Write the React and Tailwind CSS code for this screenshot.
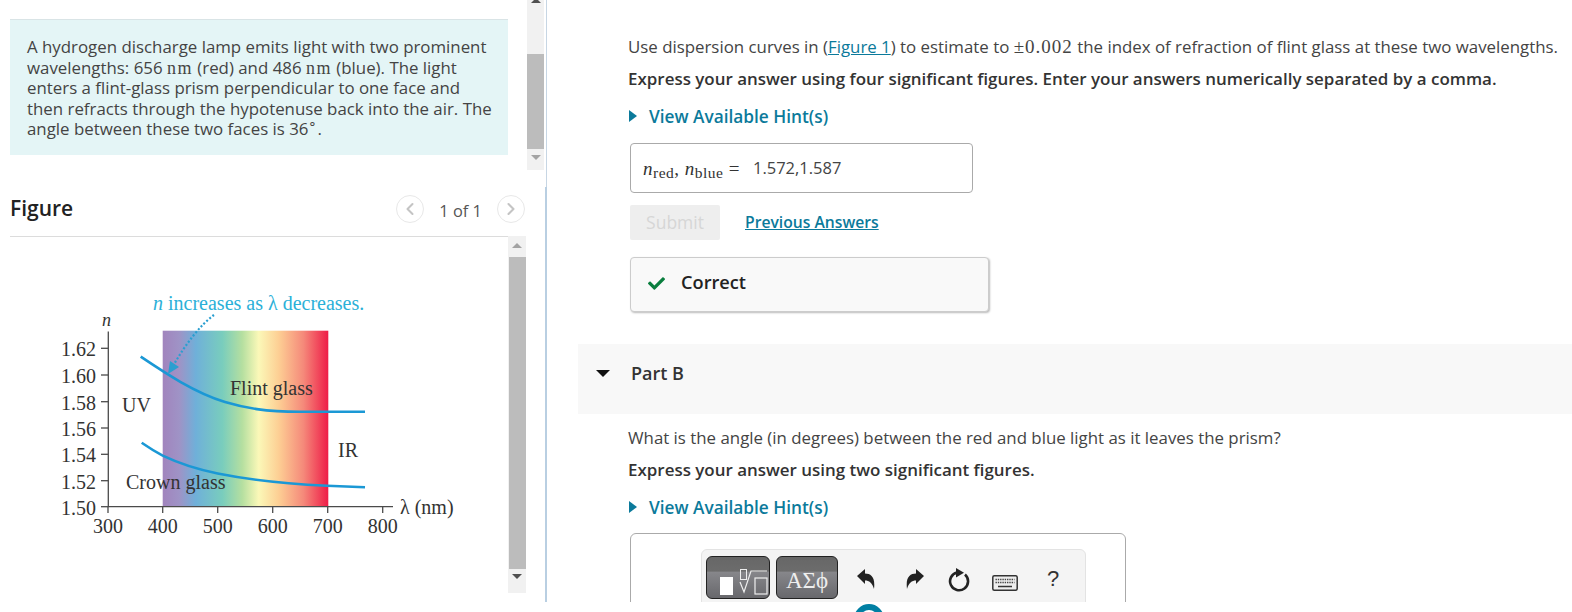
import React from 'react';
import { ChevronLeft, ChevronRight } from 'lucide-react';
import { FaCheck } from 'react-icons/fa';

const Nm = () => <span className="font-['Liberation_Serif',serif] text-[18px] leading-none tracking-[1.5px]">nm</span>;

const Hint = () => (
    <div className="flex h-[24px] items-center pl-[82px]">
        <div className="mb-[3px] h-0 w-0 border-y-[6px] border-l-[8px] border-y-transparent border-l-[#0b7a9b]"></div>
        <span className="ml-[12px] text-[17.25px] font-semibold text-[#0b7a9b]">View Available Hint(s)</span>
    </div>
);

const Chart = () => {
    const yTicks = [['1.62', 68.3], ['1.60', 95], ['1.58', 121.7], ['1.56', 148], ['1.54', 174.3], ['1.52', 200.7], ['1.50', 226.7]];
    const xTicks = [['300', 68], ['400', 122.7], ['500', 177.7], ['600', 232.7], ['700', 287.7], ['800', 342.7]];
    return (
        <svg width="430" height="270" viewBox="0 0 430 270" className="block font-['Liberation_Serif',serif]">
            <defs>
                <linearGradient id="spectrum" x1="0" x2="1" y1="0" y2="0">
                    <stop offset="0" stopColor="#a184bd" />
                    <stop offset="0.1" stopColor="#9f93c6" />
                    <stop offset="0.2" stopColor="#6fb0d9" />
                    <stop offset="0.36" stopColor="#79cdbd" />
                    <stop offset="0.48" stopColor="#b5dfa0" />
                    <stop offset="0.58" stopColor="#fbf8b8" />
                    <stop offset="0.7" stopColor="#fdcf94" />
                    <stop offset="0.85" stopColor="#f5897a" />
                    <stop offset="1" stopColor="#ee1c47" />
                </linearGradient>
            </defs>
            <rect x="122.7" y="50.7" width="165.6" height="176" fill="url(#spectrum)" />
            <path d="M68.3 51.5V226.7H353" fill="none" stroke="#4b4b4b" strokeWidth="1.3" />
            {yTicks.map(([label, y]) => (
                <g key={label}>
                    <line x1="61" x2="68.3" y1={y} y2={y} stroke="#4b4b4b" strokeWidth="1.3" />
                    <text x="56" y={y + 8} textAnchor="end" fontSize="20" fill="#333">{label}</text>
                </g>
            ))}
            {xTicks.map(([label, x]) => (
                <g key={label}>
                    <line x1={x} x2={x} y1="226.7" y2="233" stroke="#4b4b4b" strokeWidth="1.3" />
                    <text x={x} y="253" textAnchor="middle" fontSize="20" fill="#333">{label}</text>
                </g>
            ))}
            <path d="M100.7 76.7C125 93 155 113 185 122C205 128 225 131.7 260 131.7H325" fill="none" stroke="#1b98d5" strokeWidth="2.6" />
            <path d="M101.7 162.7C108 167 116 172 122.7 175.7C140 184 155 189 177.7 193.5C210 200 250 204 287 205.7L325 207.3" fill="none" stroke="#1b98d5" strokeWidth="2.6" />
            <path d="M174 35C160 45 145 65 133 86" fill="none" stroke="#2a9fd0" strokeWidth="2.2" strokeDasharray="2 2" />
            <path d="M128 94L130 81L139 87Z" fill="#2a9fd0" />
            <text x="113" y="30" fontSize="20" fill="#2bb0d8"><tspan fontStyle="italic">n</tspan> increases as λ decreases.</text>
            <text x="62" y="46" fontSize="18" fontStyle="italic" fill="#333">n</text>
            <text x="82" y="132" fontSize="20" fill="#333">UV</text>
            <text x="190" y="115" fontSize="20" fill="#333">Flint glass</text>
            <text x="298" y="177" fontSize="20" fill="#333">IR</text>
            <text x="86" y="209" fontSize="20" fill="#333">Crown glass</text>
            <text x="360" y="234" fontSize="20" fill="#333">λ (nm)</text>
        </svg>
    );
};

const Keyboard = () => (
    <svg width="26" height="16" viewBox="0 0 26 16">
        <rect x="0.8" y="0.8" width="24.4" height="14.4" rx="1.5" fill="#eee" stroke="#333" strokeWidth="1.5" />
        <path d="M3.5 4.5H22.5M3.5 7.5H22.5" stroke="#444" strokeWidth="1.6" strokeDasharray="1.4 0.9" />
        <path d="M6 11.5H20" stroke="#333" strokeWidth="1.5" />
    </svg>
);

const Refresh = () => (
    <svg width="24" height="25" viewBox="0 0 24 25">
        <path d="M10 5.5A9 9 0 1 0 18 7.5" fill="none" stroke="#222" strokeWidth="2.6" />
        <path d="M9 1L17 5.8L9 10.5Z" fill="#222" />
    </svg>
);

const Arrow = ({ flip }) => (
    <svg width="18" height="20" viewBox="0 0 18 20" className={flip ? '-scale-x-100' : ''}>
        <path d="M0 7L8 0V4.5C14 4.5 18.5 8 17 20C15.5 14 12 11.5 8 11.5V15Z" fill="#222" />
    </svg>
);

const Toolbar = () => (
    <div className="ml-[70px] mt-[15px] flex h-[70px] w-[385px] items-start rounded-[6px] border border-[#e3e3e3] bg-[#f4f4f4] pl-[4px] pt-[6px]">
        <button className="h-[43px] w-[64px] overflow-hidden rounded-[6px] border border-[#222] bg-[linear-gradient(#676767_0,#6c6c6c_35%,#87878b_36%,#68686c_100%)]">
            <svg width="62" height="41" viewBox="0 0 62 41" className="block">
                <rect x="13" y="20" width="13" height="18" fill="#fff" />
                <rect x="33.5" y="12.5" width="6" height="10" fill="none" stroke="#eee" />
                <path d="M33 25L37 35L44 14H60" fill="none" stroke="#eee" strokeWidth="1.2" />
                <rect x="48" y="21" width="12" height="16" fill="none" stroke="#eee" strokeWidth="1.2" />
            </svg>
        </button>
        <button className="ml-[6px] flex h-[43px] w-[62px] items-end justify-center rounded-[6px] border border-[#222] bg-[linear-gradient(#676767_0,#6c6c6c_35%,#87878b_36%,#68686c_100%)] pb-[4px] font-['Liberation_Serif',serif] text-[23px] leading-[26px] text-[#eee]">ΑΣϕ</button>
        <div className="ml-[19px] mt-[13px]"><Arrow /></div>
        <div className="ml-[31px] mt-[13px]"><Arrow flip /></div>
        <div className="ml-[23px] mt-[11px]"><Refresh /></div>
        <div className="ml-[21px] mt-[19px]"><Keyboard /></div>
        <span className="ml-[29px] mt-[9px] font-['Liberation_Sans',sans-serif] text-[22px] leading-[28px] text-[#333]">?</span>
    </div>
);

const App = () => {
    return (
        <div className="relative flex h-[612px] w-[1572px] overflow-hidden bg-white font-['Open_Sans',sans-serif] text-[16.85px] text-[#444]">
            <div className="h-[602px] w-[545px] shrink-0">
                <div className="flex h-[170px]">
                    <div className="w-[527px] pl-[10px] pt-[19px]">
                        <div className="h-[136px] w-[498px] border-t border-[#d9e4e6] bg-[#e4f5f6] pl-[17px] pt-[17px] leading-[20.5px]">
                            A hydrogen discharge lamp emits light with two prominent<br />
                            wavelengths: 656 <Nm /> (red) and 486 <Nm /> (blue). The light<br />
                            enters a flint-glass prism perpendicular to one face and<br />
                            then refracts through the hypotenuse back into the air. The<br />
                            angle between these two faces is 36<sup className="text-[14px] leading-none">∘</sup>.
                        </div>
                    </div>
                    <div className="flex w-[17px] flex-col items-center bg-[#f1f1f1]">
                        <div className="-mt-[2px] h-0 w-0 border-x-[5px] border-b-[5px] border-x-transparent border-b-[#505050]"></div>
                        <div className="mt-[51px] h-[95px] w-[17px] bg-[#bcbcbc]"></div>
                        <div className="mt-[6px] h-0 w-0 border-x-[5px] border-t-[5px] border-x-transparent border-t-[#a3a3a3]"></div>
                    </div>
                </div>
                <div className="flex h-[66px] w-[526px] items-center pl-[10px] pr-[1px] pt-[12px]">
                    <span className="text-[21px] font-semibold text-[#222]">Figure</span>
                    <div className="ml-auto flex h-[28px] w-[28px] items-center justify-center rounded-full border border-[#e8e8e8] text-[#c4c4c4]"><ChevronLeft size={20} strokeWidth={2.5} /></div>
                    <span className="mx-[15px] mt-[4px] text-[16.4px] text-[#555]">1 of 1</span>
                    <div className="flex h-[28px] w-[28px] items-center justify-center rounded-full border border-[#e8e8e8] text-[#c4c4c4]"><ChevronRight size={20} strokeWidth={2.5} /></div>
                </div>
                <div className="flex">
                    <div className="ml-[10px] h-[357px] w-[498px] border-t border-[#dcdcdc] pl-[30px] pt-[43px]">
                        <Chart />
                    </div>
                    <div className="flex h-[357px] w-[18px] flex-col items-center bg-[#f1f1f1]">
                        <div className="mt-[7px] h-0 w-0 border-x-[5px] border-b-[5px] border-x-transparent border-b-[#a3a3a3]"></div>
                        <div className="mt-[9px] h-[312px] w-[17px] bg-[#bcbcbc]"></div>
                        <div className="mt-[5px] h-0 w-0 border-x-[5px] border-t-[5px] border-x-transparent border-t-[#505050]"></div>
                    </div>
                </div>
            </div>
            <div className="flex w-[2px] shrink-0 flex-col items-end">
                <div className="h-[187px] w-[1px] bg-[#c7d6e4]"></div>
                <div className="h-[415px] w-[2px] bg-[#b9cfe2]"></div>
            </div>
            <div className="h-[602px] grow overflow-hidden">
                <div className="pl-[81px] pt-[35px] leading-[24px]">
                    Use dispersion curves in (<span className="text-[#0b7a9b] underline">Figure 1</span>) to estimate to <span className="font-['Liberation_Serif',serif] text-[19px] leading-none tracking-[1px]">±0.002</span> the index of refraction of flint glass at these two wavelengths.
                </div>
                <div className="mt-[8px] pl-[81px] text-[16.95px] font-semibold leading-[24px] text-[#333]">Express your answer using four significant figures. Enter your answers numerically separated by a comma.</div>
                <div className="mt-[14px]"><Hint /></div>
                <div className="ml-[83px] mt-[14px] flex h-[50px] w-[343px] items-center rounded-[4px] border border-[#aaa] pl-[12px]">
                    <span className="font-['Liberation_Serif',serif] text-[19px] leading-none tracking-[0.5px] text-[#333]">
                        <i>n</i><sub className="text-[15.5px]">red</sub>, <i>n</i><sub className="text-[15.5px]">blue</sub> =
                    </span>
                    <span className="ml-[13px] text-[16.5px] text-[#444]">1.572,1.587</span>
                </div>
                <div className="ml-[83px] mt-[12px] flex items-center">
                    <div className="flex h-[35px] w-[90px] items-center justify-center rounded-[2px] bg-[#eee] text-[17.5px] text-[#d6d6d6]">Submit</div>
                    <span className="ml-[25px] text-[15.7px] font-semibold text-[#0b7a9b] underline">Previous Answers</span>
                </div>
                <div className="ml-[83px] mt-[17px] flex h-[55px] w-[359px] items-center rounded-[4px] border border-[#ccc] bg-[#f9f9f9] pb-[3px] pl-[17px] shadow-[1px_1px_2px_#bbb]">
                    <FaCheck className="text-[#0a7e3e]" size={17} />
                    <span className="ml-[16px] text-[18.2px] font-semibold text-[#222]">Correct</span>
                </div>
                <div className="ml-[31px] mt-[32px] flex h-[70px] items-center bg-[#f8f8f8] pb-[12px] pl-[18px]">
                    <div className="h-0 w-0 border-x-[7px] border-t-[7px] border-x-transparent border-t-[#111]"></div>
                    <span className="ml-[21px] text-[18px] font-semibold text-[#333]">Part B</span>
                </div>
                <div className="mt-[12px] pl-[81px] leading-[24px]">What is the angle (in degrees) between the red and blue light as it leaves the prism?</div>
                <div className="mt-[8px] pl-[81px] text-[16.95px] font-semibold leading-[24px] text-[#333]">Express your answer using two significant figures.</div>
                <div className="mt-[14px]"><Hint /></div>
                <div className="ml-[83px] mt-[13px] h-[100px] w-[496px] rounded-[6px] border border-[#aaa]">
                    <Toolbar />
                </div>
            </div>
            <div className="absolute left-[854px] top-[604px] h-[30px] w-[30px] rounded-full border-[6px] border-[#007fa3] bg-white"></div>
        </div>
    );
};

export default App;
